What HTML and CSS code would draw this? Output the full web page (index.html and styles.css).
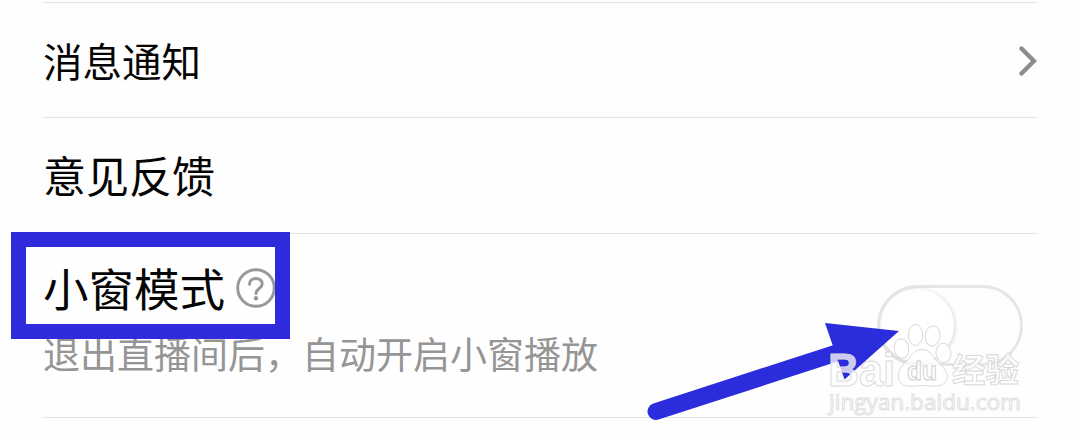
FILE: index.html
```html
<!DOCTYPE html>
<html lang="zh-CN">

<head>
	<meta charset="UTF-8">
	<meta name="viewport" content="width=device-width, initial-scale=1.0">
	<title>设置</title>
	<link rel="stylesheet" href="styles.css">
</head>

<body>
	<main class="settings">
		<div class="row row-notice">
			<span class="label">消息通知</span>
			<svg class="chevron" viewBox="0 0 20 32">
				<path d="M4.5 4.5 L17 17 L4.5 29.5" />
			</svg>
		</div>
		<div class="row row-feedback">
			<span class="label">意见反馈</span>
		</div>
		<div class="row row-window">
			<div class="info">
				<div class="title">
					<span class="label">小窗模式</span>
					<svg class="help" viewBox="0 0 40 40">
						<circle cx="20" cy="20" r="18.3" />
						<path d="M13.5 16.2 C13.5 8.5 26.2 8.5 26.2 16 C26.2 20.5 20 20.5 20 25.5" />
						<circle class="dot" cx="20" cy="30.3" r="2.2" />
					</svg>
				</div>
				<p class="desc">退出直播间后，自动开启小窗播放</p>
			</div>
			<div class="switch"><span class="knob"></span></div>
		</div>
	</main>

	<div class="highlight"></div>

	<svg class="overlay" viewBox="0 0 1080 440">
		<g class="arrow">
			<path class="shaft" d="M656 411.5 L838 352.5" />
			<polygon points="825,323 899,331 844.5,379.5" />
		</g>
		<g class="watermark">
			<text class="brand" x="828" y="385.5" textLength="67" lengthAdjust="spacingAndGlyphs">Bai</text>
			<ellipse cx="901.5" cy="348.5" rx="7.2" ry="9.8" transform="rotate(-8 901.5 348.5)" />
			<ellipse cx="915.5" cy="335" rx="7.2" ry="10.5" />
			<ellipse cx="932.5" cy="336" rx="7.5" ry="10" transform="rotate(8 932.5 336)" />
			<ellipse cx="943.5" cy="353" rx="7.5" ry="9.8" transform="rotate(-4 943.5 353)" />
			<path d="M922 349.5 C931 349.5 933 358 939 363 C946 369 949 376 946 381 C941 389 930 385.5 922 385.5 C914 385.5 904 389 899.5 381 C896.5 374 900 368 905 363 C911 358 913 349.5 922 349.5 Z" />
			<text class="du" x="907" y="380" textLength="30" lengthAdjust="spacingAndGlyphs">du</text>
			<text class="cn" x="952" y="382">经验</text>
			<text class="url" x="829" y="410" textLength="192" lengthAdjust="spacingAndGlyphs">jingyan.baidu.com</text>
		</g>
	</svg>
</body>

</html>
```

FILE: styles.css
```css
*,
*::before,
*::after {
	box-sizing: border-box;
}

html, body {
	margin: 0;
	height: 440px;
	overflow: hidden;
	background: #fefefe;
	font-family: "Noto Sans CJK SC", sans-serif;
}

.settings {
	margin: 2px 43px 0;
	border-top: 1px solid #e4e4e4;
}

.row {
	display: flex;
	justify-content: space-between;
	align-items: center;
	border-bottom: 1px solid #e4e4e4;
}

.label {
	color: #050505;
	line-height: 1;
}

.row-notice {
	height: 115px;
	font-size: 39.5px;
}

.row-feedback {
	height: 116px;
	padding-bottom: 2px;
	font-size: 43px;
}

.row-window {
	height: 184px;
	font-size: 45.5px;
	padding-right: 14px;
}

.chevron {
	width: 20px;
	height: 32px;
	fill: none;
	stroke: #8c8c8c;
	stroke-width: 4.4;
	stroke-linecap: round;
}

.info {
	padding-bottom: 14px;
}

.title {
	display: flex;
	align-items: center;
	gap: 11px;
}

.help {
	width: 40px;
	height: 40px;
	fill: none;
	stroke: #999;
	stroke-width: 3;
	stroke-linecap: round;
}

.help .dot {
	fill: #999;
	stroke: none;
}

.desc {
	margin: 24px 0 0;
	font-size: 37px;
	line-height: 1;
	color: #959595;
}

.switch {
	width: 146px;
	height: 81px;
	padding: 1px;
	border: 3px solid #e6e6e6;
	border-radius: 41px;
}

.knob {
	display: block;
	width: 73px;
	height: 73px;
	border-radius: 50%;
	background: #fff;
	box-shadow: 1px 1px 4px rgba(0, 0, 0, 0.16);
}

/* marcas encima de la lista */
.highlight {
	position: absolute;
	left: 11px;
	top: 232px;
	width: 279px;
	height: 107px;
	border: 15px solid #2f2adc;
}

.overlay {
	position: absolute;
	left: 0;
	top: 0;
	width: 1080px;
	height: 440px;
}

.arrow {
	fill: #2b2cdb;
}

.shaft {
	stroke: #2b2cdb;
	stroke-width: 17;
	stroke-linecap: round;
}

.watermark {
	fill: rgba(255, 255, 255, 0.75);
	stroke: #d9d9d9;
	stroke-width: 1;
	font-family: "Liberation Sans", Arial, sans-serif;
}

.brand {
	font-size: 46px;
	font-weight: bold;
}

.du {
	font-size: 26px;
	font-weight: bold;
	stroke: #cfcfcf;
}

.cn {
	font-family: "Noto Sans CJK SC", sans-serif;
	font-size: 33.5px;
	font-weight: bold;
}

.url {
	font-family: "Open Sans", sans-serif;
	font-size: 22px;
	stroke: #e0e0e0;
}
```
